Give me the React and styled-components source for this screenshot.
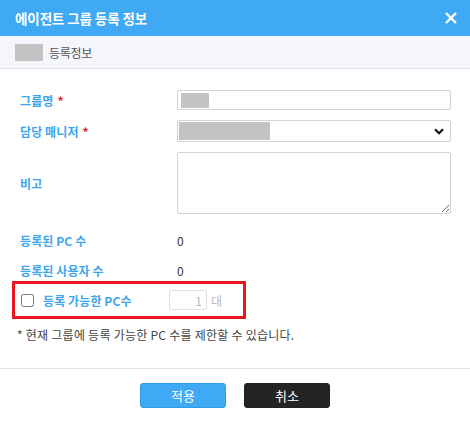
import React from 'react';
import styled, { createGlobalStyle } from 'styled-components';

const GlobalStyle = createGlobalStyle`
  body {
    margin: 0;
    background: #fff;
    font-family: "Noto Sans CJK KR", "Noto Sans", sans-serif;
  }
`;

const Modal = styled.div`
  width: 470px;
  height: 432px;
  background: #fff;
  display: flex;
  flex-direction: column;
`;

const Header = styled.div`
  height: 36px;
  background: #3fa9f3;
  display: flex;
  align-items: center;
  justify-content: space-between;
  padding: 0 12px 0 15px;
`;

const Title = styled.h2`
  margin: 0;
  font-size: 13.5px;
  font-weight: 700;
  color: #fff;
  letter-spacing: -0.1px;
`;

const CloseButton = styled.button`
  border: 0;
  background: none;
  padding: 0;
  width: 14px;
  height: 14px;
  display: flex;
  cursor: pointer;
`;

const SubHeader = styled.div`
  height: 32px;
  background: #f4f6fc;
  border-bottom: 1px solid #dcdfe4;
  display: flex;
  align-items: center;
  gap: 6px;
  padding: 0 15px;
`;

const Masked = styled.span`
  display: block;
  width: ${(p) => p.w}px;
  height: ${(p) => p.h}px;
  background: #c3c3c3;
`;

const SubTitle = styled.span`
  font-size: 12px;
  color: #555;
  letter-spacing: -0.3px;
`;

const Form = styled.div`
  padding: 21px 19px 0 20px;
  display: flex;
  flex-direction: column;
`;

const Row = styled.div`
  display: grid;
  grid-template-columns: 157px 1fr;
  align-items: center;
  margin-top: ${(p) => p.mt || 0}px;
  min-height: ${(p) => p.h || 20}px;
`;

const Label = styled.label`
  font-size: 12px;
  font-weight: 700;
  color: #3ea5ea;
  letter-spacing: 0.1px;
`;

const Required = styled.span`
  color: #e2231a;
  margin-left: 4px;
`;

const TextBox = styled.div`
  height: 20px;
  box-sizing: border-box;
  border: 1px solid #d3d3d3;
  border-radius: 2px;
  padding: 2px 3px;
  display: flex;
  align-items: center;
`;

const SelectBox = styled.div`
  height: 22px;
  box-sizing: border-box;
  border: 1px solid #d3d3d3;
  border-radius: 2px;
  padding: 1px 6px 1px 1px;
  display: flex;
  align-items: center;
  justify-content: space-between;
`;

const Memo = styled.textarea`
  height: 62px;
  box-sizing: border-box;
  border: 1px solid #d3d3d3;
  border-radius: 2px;
  resize: vertical;
  font-family: inherit;
  margin: 0;
`;

const Value = styled.span`
  font-size: 12px;
  color: #333;
`;

const Highlight = styled.div`
  margin: 1px 0 0 -8px;
  width: 234px;
  height: 38px;
  box-sizing: border-box;
  border: 3px solid #e8161e;
  display: flex;
  align-items: center;
  padding-left: 6px;
`;

const Check = styled.input`
  margin: 0 9px 0 0;
  width: 13px;
  height: 13px;
`;

const LimitLabel = styled(Label)`
  width: 126px;
`;

const NumInput = styled.input`
  width: 38px;
  height: 20px;
  box-sizing: border-box;
  border: 1px solid #e0e0e0;
  border-radius: 2px;
  background: #fff;
  color: #bbb;
  font-size: 12px;
  text-align: right;
  padding: 0 4px;
  font-family: inherit;
`;

const Unit = styled.span`
  font-size: 12px;
  color: #bbb;
  margin-left: 4px;
`;

const Note = styled.p`
  margin: 7px 0 0 -3px;
  font-size: 12px;
  color: #444;
  letter-spacing: 0.25px;
`;

const Footer = styled.div`
  margin-top: 25px;
  border-top: 1px solid #dde3e8;
  display: flex;
  justify-content: center;
  gap: 18px;
  padding-top: 14px;
`;

const Button = styled.button`
  width: 86px;
  height: 25px;
  border-radius: 3px;
  border: 1px solid ${(p) => (p.primary ? '#2f9be6' : '#222')};
  background: ${(p) => (p.primary ? '#3fa9f3' : '#242424')};
  color: #fff;
  font-size: 13px;
  font-family: inherit;
  font-weight: 400;
  cursor: pointer;
`;

export default function App() {
  return (
    <Modal>
      <GlobalStyle />
      <Header>
        <Title>에이전트 그룹 등록 정보</Title>
        <CloseButton aria-label="닫기">
          <svg width="14" height="14" viewBox="0 0 14 14">
            <path d="M2 2L12 12M12 2L2 12" stroke="#fff" strokeWidth="2.4" />
          </svg>
        </CloseButton>
      </Header>
      <SubHeader>
        <Masked w={28} h={17} />
        <SubTitle>등록정보</SubTitle>
      </SubHeader>
      <Form>
        <Row>
          <Label>그룹명<Required>*</Required></Label>
          <TextBox><Masked w={28} h={15} /></TextBox>
        </Row>
        <Row mt={10} h={22}>
          <Label>담당 매니저<Required>*</Required></Label>
          <SelectBox>
            <Masked w={91} h={18} />
            <svg width="10" height="7" viewBox="0 0 10 7">
              <path d="M1 1.2L5 5.2L9 1.2" stroke="#111" strokeWidth="2.2" fill="none" />
            </svg>
          </SelectBox>
        </Row>
        <Row mt={10} h={62}>
          <Label>비고</Label>
          <Memo />
        </Row>
        <Row mt={16}>
          <Label>등록된 PC 수</Label>
          <Value>0</Value>
        </Row>
        <Row mt={10}>
          <Label>등록된 사용자 수</Label>
          <Value>0</Value>
        </Row>
        <Highlight>
          <Check type="checkbox" />
          <LimitLabel>등록 가능한 PC수</LimitLabel>
          <NumInput type="text" value="1" disabled readOnly />
          <Unit>대</Unit>
        </Highlight>
        <Note>* 현재 그룹에 등록 가능한 PC 수를 제한할 수 있습니다.</Note>
      </Form>
      <Footer>
        <Button primary>적용</Button>
        <Button>취소</Button>
      </Footer>
    </Modal>
  );
}
